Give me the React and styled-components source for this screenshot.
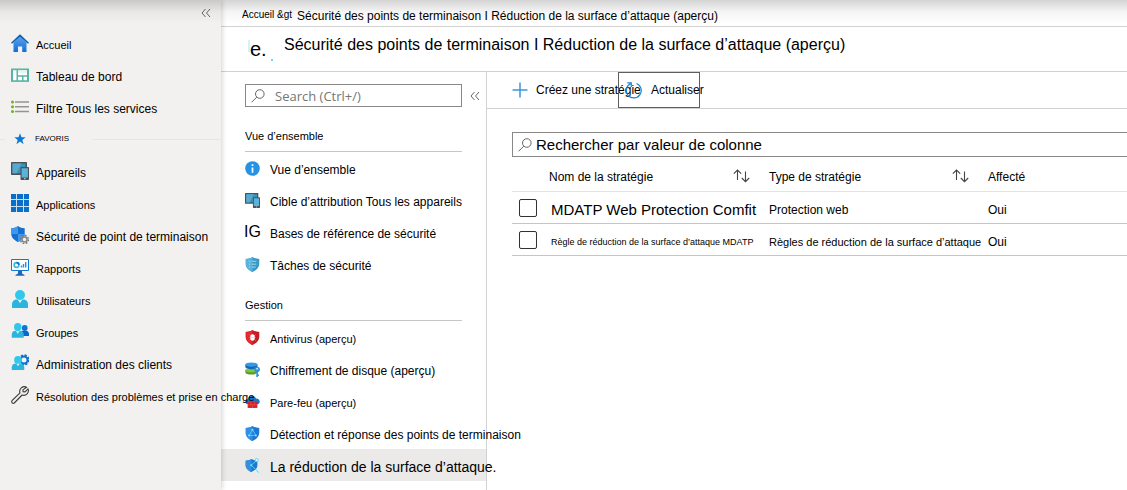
import React from "react";
import styled, { createGlobalStyle } from "styled-components";

const GlobalStyle = createGlobalStyle`
  *, *::before, *::after { box-sizing: border-box; }
  body {
    margin: 0;
    background: #fff;
    color: #000;
    font-family: "Liberation Sans", Arial, sans-serif;
    font-size: 12px;
    line-height: 16px;
  }
  button, input { font: inherit; color: inherit; }
`;

const Page = styled.div`
  position: relative;
  display: flex;
  min-height: 100vh;
  overflow: hidden;
`;

const TopShade = styled.div`
  position: absolute;
  inset: 0 0 auto;
  z-index: 3;
  height: 24px;
  pointer-events: none;
  background: linear-gradient(rgba(0, 0, 0, 0.17), rgba(0, 0, 0, 0.04) 50%, transparent);
`;

const Sidebar = styled.nav`
  position: relative;
  z-index: 2;
  flex: 0 0 221px;
  min-width: 0;
  background: #f2f1f0;
  box-shadow: 1px 0 5px rgba(0, 0, 0, 0.18);
`;

const SidebarTop = styled.div`
  display: flex;
  justify-content: flex-end;
  height: 27px;
  padding: 7px 9px 0;
`;

const CollapseButton = styled.button`
  display: flex;
  width: 12px;
  height: 12px;
  padding: 0;
  border: 0;
  background: none;
  color: #666;
`;

const List = styled.ul`
  margin: 0;
  padding: 0;
  list-style: none;
`;

const SideLink = styled.a`
  display: flex;
  align-items: center;
  gap: 7px;
  height: 32px;
  padding-left: 11px;
  color: inherit;
  text-decoration: none;
  white-space: nowrap;
`;

const IconBox = styled.span`
  display: flex;
  flex: none;
  align-items: center;
  justify-content: center;
  width: ${(p) => p.$size}px;
  height: ${(p) => p.$size}px;
  svg { display: block; width: 100%; height: 100%; }
`;

const Label = styled.span`
  padding-top: 4px;
  font-size: ${(p) => p.$size || 12}px;
`;

const Favorites = styled.div`
  display: flex;
  align-items: center;
  gap: 9px;
  height: 32px;
  font-size: 8px;
  &::before, &::after { content: ""; height: 1px; background: #e8e6e4; }
  &::before { width: 5px; }
  &::after { flex: 1; margin-left: 14px; }
`;

const Main = styled.main`
  display: flex;
  flex: 1;
  flex-direction: column;
  min-width: 0;
`;

const Breadcrumb = styled.nav`
  display: flex;
  align-items: center;
  gap: 5px;
  height: 27px;
  padding: 5px 0 0 21px;
  border-bottom: 1px solid #d2d2d2;
  white-space: nowrap;
`;

const HomeCrumb = styled.a`
  padding-bottom: 2px;
  color: inherit;
  font-size: 10px;
  text-decoration: none;
`;

const TitleBar = styled.header`
  display: flex;
  gap: 11px;
  height: 45px;
  padding-left: 27px;
  border-bottom: 1px solid #d2d2d2;
`;

const Mark = styled.div`
  display: flex;
  align-items: flex-end;
  width: 25px;
  padding-bottom: 10px;
  font-size: 20px;
  line-height: 24px;
  svg { flex: none; }
`;

const Title = styled.h1`
  margin: 0;
  padding-top: 8px;
  font-size: 16px;
  font-weight: 400;
  line-height: 20px;
  white-space: nowrap;
`;

const Body = styled.div`
  display: flex;
  flex: 1;
`;

const SubNav = styled.nav`
  flex: 0 0 266px;
  min-width: 0;
  padding-top: 12px;
  border-right: 1px solid #d2d2d2;
`;

const SearchRow = styled.div`
  display: flex;
  align-items: center;
  gap: 7px;
  padding-left: 24px;
`;

const SearchField = styled.label`
  display: flex;
  flex: ${(p) => (p.$wide ? "1" : "0 0 217px")};
  align-items: center;
  gap: ${(p) => (p.$wide ? 4 : 10)}px;
  height: ${(p) => (p.$wide ? 25 : 23)}px;
  padding-left: 5px;
  border: 1px solid #8a8886;
  border-right-width: ${(p) => (p.$wide ? 0 : 1)}px;
  svg { flex: none; }
`;

const SearchInput = styled.input`
  flex: 1;
  min-width: 0;
  padding: 0;
  border: 0;
  outline: 0;
  background: none;
  font-size: ${(p) => (p.$wide ? 15 : 13)}px;
  font-family: ${(p) => (p.$wide ? "inherit" : '"Open Sans", "Noto Sans", sans-serif')};
  &::placeholder { color: ${(p) => (p.$wide ? "#000" : "#767676")}; opacity: 1; }
`;

const GroupTitle = styled.h2`
  display: flex;
  align-items: flex-end;
  height: ${(p) => (p.$first ? 45 : 41)}px;
  margin: 0 24px;
  padding-bottom: 7px;
  border-bottom: 1px solid #c8c6c4;
  font-size: 11px;
  font-weight: 400;
`;

const SubLink = styled.a`
  position: relative;
  display: flex;
  align-items: center;
  gap: 10px;
  height: 32px;
  padding-left: 24px;
  background: ${(p) => (p.$active ? "#ebeae8" : "none")};
  color: inherit;
  text-decoration: none;
  white-space: nowrap;
`;

const Initials = styled.span`
  font-size: 16px;
`;

const Content = styled.section`
  flex: 1;
  min-width: 0;
`;

const Toolbar = styled.div`
  display: flex;
  height: 37px;
  padding-left: 25px;
  border-bottom: 1px solid #d2d2d2;
`;

const ToolButton = styled.button`
  display: flex;
  align-items: center;
  gap: ${(p) => (p.$boxed ? 8 : 7)}px;
  width: ${(p) => (p.$boxed ? 82 : 106)}px;
  height: 36px;
  padding: 0 0 0 ${(p) => (p.$boxed ? 6 : 0)}px;
  border: ${(p) => (p.$boxed ? "1px solid #605e5c" : "0")};
  background: none;
  white-space: nowrap;
  svg { flex: none; }
`;

const Panel = styled.div`
  padding: 23px 0 0 25px;
`;

const Table = styled.table`
  width: 100%;
  border-collapse: separate;
  border-spacing: 0;
  table-layout: fixed;
`;

const HeadCell = styled.th`
  width: ${(p) => (p.$width ? p.$width + "px" : "auto")};
  height: 35px;
  padding: 6px 0 0;
  border-bottom: 1px solid #e5e3e1;
  font-weight: 400;
  text-align: left;
`;

const HeadInner = styled.div`
  display: flex;
  align-items: center;
  justify-content: space-between;
  padding-right: 19px;
`;

const SortButton = styled.button`
  display: flex;
  height: 16px;
  padding: 0;
  border: 0;
  background: none;
`;

const Cell = styled.td`
  height: 32px;
  padding: 5px 0 0 ${(p) => p.$indent || 0}px;
  border-bottom: 1px solid #c8c6c4;
  font-size: ${(p) => p.$size || 12}px;
  white-space: nowrap;
`;

const CheckCell = styled(Cell)`
  padding: 0 0 0 7px;
`;

const Check = styled.input`
  display: block;
  width: 18px;
  height: 18px;
  margin: 0;
  appearance: none;
  border: 1px solid #323130;
  border-radius: 2px;
  background: #fff;
  &:checked { background: #0078d4; }
`;

const Chevrons = () => (
  <svg width="12" height="12" viewBox="0 0 12 12" fill="none" stroke="#666" strokeWidth="1">
    <path d="M5.500 2 2 6l3.500 4M10 2 6.500 6 10 10" />
  </svg>
);

const Magnifier = () => (
  <svg width="14" height="14" viewBox="0 0 14 14" fill="none" stroke="#666" strokeWidth="1">
    <circle cx="8.800" cy="5" r="4.300" />
    <path d="M5.700 8.200.6 13.300" />
  </svg>
);

const SortArrows = () => (
  <svg width="17" height="14" viewBox="0 0 17 14" fill="none" stroke="#444" strokeWidth="1.100">
    <path d="M4.500 11V1M.8 4.700l3.700-3.700 3.700 3.700M12.500 2.500v10.200M8.800 9l3.700 3.700L16.200 9" />
  </svg>
);

const HomeIcon = () => (
  <svg viewBox="0 0 18 18">
    <defs><linearGradient id="home" x2="0" y2="1"><stop stopColor="#5ea0ef" /><stop offset="1" stopColor="#0f6fd8" /></linearGradient></defs>
    <path d="M2.500 8.500 9 2.500l6.500 6V18h-4.300v-5.500H7V18H2.500z" fill="url(#home)" />
    <path d="M9 .2 18 8.700l-1 1L9 2.800 1 9.700l-1-1z" fill="#0b61b0" />
  </svg>
);

const DashboardIcon = () => (
  <svg viewBox="0 0 18 18">
    <path d="M0 2.500h18v13.400H0z" fill="#57b5a5" />
    <path d="M2 4.300h3.500v10H2zM7 4.300h9v5H7zM7 10.700h4v3.600H7zM12.500 10.700H16v3.600h-3.500z" fill="#fff" />
    <path d="M7 4.300h9v2.500H7z" fill="#e2f5f1" />
  </svg>
);

const ListIcon = () => (
  <svg viewBox="0 0 18 18">
    <path d="M4 4h14M4 8.800h14M4 13.500h14" stroke="#949494" strokeWidth="1.500" />
    <g fill="#6bb120"><circle cx="1.500" cy="4" r="1.500" /><circle cx="1.500" cy="8.800" r="1.500" /><circle cx="1.500" cy="13.500" r="1.500" /></g>
  </svg>
);

const StarIcon = () => (
  <svg width="12" height="12" viewBox="0 0 12 12">
    <path d="m6 .3 1.500 4h4.200L8.300 6.900l1.300 4.400L6 8.600l-3.600 2.700 1.300-4.400L.3 4.300h4.200z" fill="#0a78d7" />
  </svg>
);

const DevicesIcon = () => (
  <svg viewBox="0 0 18 18">
    <rect width="16" height="13" rx=".7" fill="#4c5158" />
    <path d="M1.500 1.500h13v9.800h-13z" fill="#3d91bb" />
    <path d="M1.500 1.500h9l-5 9.800h-4z" fill="#58a9cf" />
    <rect x="9.500" y="5" width="8.500" height="13" rx=".8" fill="#4c5158" />
    <path d="M10.600 6.200h6.300v9.400h-6.300z" fill="#59b4d9" />
    <path d="M13 16.700h1.500" stroke="#ddd" />
  </svg>
);

const GridIcon = () => (
  <svg viewBox="0 0 18 18">
    <path d="M0 0h18v18H0z" fill="#0870c9" />
    <path d="M5.500 0v18M12.500 0v18M0 5.500h18M0 12.500h18" stroke="#c9dff2" strokeWidth="1" />
  </svg>
);

const ShieldGearIcon = () => (
  <svg viewBox="0 0 18 18">
    <path d="M7 0c2 1.600 4 2.200 6.700 2.200V8c0 4-3.700 6.500-6.700 8C4 14.500.3 12 .3 8V2.200C3 2.200 5 1.600 7 0z" fill="#1770d1" />
    <path d="M7 0v8H.3V2.200C3 2.200 5 1.600 7 0zM7 8h6.700C13.700 12 10 14.500 7 16z" fill="#3b9af0" />
    <circle cx="13.500" cy="13.500" r="4" fill="none" stroke="#7a7a7a" strokeWidth="1.500" strokeDasharray="1.700 1.440" />
    <circle cx="13.500" cy="13.500" r="2.500" fill="#f2f1f0" stroke="#888" strokeWidth="1.600" />
  </svg>
);

const ReportIcon = () => (
  <svg viewBox="0 0 18 18">
    <path d="M.5 1.500h17v11H.5z" fill="#fff" stroke="#1677cf" />
    <circle cx="5.500" cy="7" r="2.400" fill="none" stroke="#32bedd" strokeWidth="1.600" />
    <path d="M5.500 4.600A2.400 2.400 0 0 1 7.900 7" fill="none" stroke="#0f6fd8" strokeWidth="1.600" />
    <path d="M10.500 9.500V7.500M12.500 9.500V6M14.700 9.500V4" stroke="#278de0" strokeWidth="1.400" />
    <path d="M7 13h4v2.500l2.500 1.500v.7h-9V17L7 15.500z" fill="#1769b5" />
  </svg>
);

const Person = () => (
  <g>
    <path d="M1 18v-3.500C1 11 3 9.500 6 9.500h6c3 0 5 1.500 5 5V18z" fill="#2bb5dc" />
    <path d="m6.500 9.300 2.500 4 2.500-4z" fill="#d9f7fd" />
    <circle cx="9" cy="5" r="5" fill="#32c8eb" />
  </g>
);

const UserIcon = () => <svg viewBox="0 0 18 18"><Person /></svg>;

const GroupIcon = () => (
  <svg viewBox="0 0 18 18">
    <path d="M9 14v-2c0-2 1.500-3.300 3-3.300h3c1.700 0 3 1.300 3 3.300v2z" fill="#0a67c5" />
    <circle cx="13.700" cy="6" r="2.900" fill="#0c75d6" />
    <g transform="translate(0 1) scale(.75 .82)"><Person /></g>
  </svg>
);

const AdminIcon = () => (
  <svg viewBox="0 0 18 18">
    <circle cx="13" cy="6" r="4.800" fill="none" stroke="#0b70ce" strokeWidth="1.800" strokeDasharray="2.200 1.570" />
    <circle cx="13" cy="6" r="3.500" fill="none" stroke="#0b70ce" strokeWidth="2" />
    <g transform="translate(0 2) scale(.78)"><Person /></g>
  </svg>
);

const WrenchIcon = () => (
  <svg viewBox="0 0 18 18" fill="none" stroke="#3b3a39" strokeWidth="1.100">
    <path d="M15.500 1.300A4.600 4.600 0 0 0 9 6.900L1 14.700c-1 1.500.8 3.300 2.300 2.300l7.800-8a4.600 4.600 0 0 0 5.900-6.100l-3 3-1.900-.1-.2-1.900z" />
  </svg>
);

const InfoIcon = () => (
  <svg viewBox="0 0 14 14">
    <circle cx="7" cy="7" r="6.800" fill="#2492e5" />
    <path d="M7 6v5M7 3v1.700" stroke="#fff" strokeWidth="1.600" />
  </svg>
);

const Shield = ({ fill, light }) => (
  <>
    <path d="M7 0c2 1.300 4 1.800 6.300 1.800V6.500c0 3.700-3.300 6-6.300 7.500-3-1.500-6.300-3.800-6.300-7.500V1.800C3 1.800 5 1.300 7 0z" fill={fill} />
    <path d="M7 0v14C4 12.500.7 10.200.7 6.500V1.800C3 1.800 5 1.300 7 0z" fill={light} />
  </>
);

const TasksIcon = () => (
  <svg viewBox="0 0 14 14">
    <Shield fill="#3999c6" light="#59b4d9" />
    <path d="M6.500 4h4M6.500 6.700h4M6.500 9.400h3.500M3.500 4h1.500M3.500 6.700h1.500M3.500 9.400h1.500" stroke="#a4d7ea" strokeWidth=".9" />
  </svg>
);

const AntivirusIcon = () => (
  <svg viewBox="0 0 14 14">
    <Shield fill="#c51c24" light="#e02a2d" />
    <ellipse cx="7" cy="7" rx="2.100" ry="3" fill="#fff" />
    <path d="m4.200 4.300 1.300 1.300M9.800 4.300 8.500 5.600M4 7h6M4.200 9.700l1.300-1.300M9.800 9.700 8.500 8.400" stroke="#f7baba" strokeWidth=".6" />
  </svg>
);

const DiskIcon = () => (
  <svg viewBox="0 0 14 14">
    <path d="M.3 7.500v2c0 3 11 3 11 0v-2z" fill="#5b9d25" />
    <ellipse cx="5.800" cy="7.600" rx="5.500" ry="2" fill="#82c43c" />
    <path d="M.3 2.400v2c0 3 11.400 3 11.400 0v-2z" fill="#1068bd" />
    <ellipse cx="6" cy="2.400" rx="5.700" ry="2" fill="#3399e4" />
    <circle cx="11.300" cy="7" r="2.600" fill="#2b91df" />
    <path d="M11.300 9v5M11.300 12.300h1.700" stroke="#2b91df" strokeWidth="1.500" />
    <circle cx="11.300" cy="6.300" r=".8" fill="#fff" />
  </svg>
);

const FirewallIcon = () => (
  <svg viewBox="0 0 14 14">
    <path d="M3 9.500C-.8 9.500-.5 5 2.600 4.800 3.300.8 9.300.5 10.300 4.300c4-.2 4.700 5.200 1 5.200z" fill="#1875cc" />
    <path d="M2.500 7.500h9V13h-9z" fill="#d42026" />
    <path d="M2.500 10.200h9M5.500 7.500v2.700M9 7.500v2.700M7 10.200V13" stroke="#ec6060" strokeWidth=".5" />
  </svg>
);

const DetectIcon = () => (
  <svg viewBox="0 0 14 14">
    <Shield fill="#1c78d2" light="#318fe4" />
    <path d="m7 3.500 3.200 5.300H3.800z" fill="none" stroke="#5ed0f2" strokeWidth=".8" />
    <g fill="#7ee5fb"><circle cx="7" cy="3.500" r=".9" /><circle cx="3.800" cy="8.800" r=".9" /><circle cx="10.200" cy="8.800" r=".9" /></g>
  </svg>
);

const SurfaceIcon = () => (
  <svg viewBox="0 0 14 14">
    <g transform="translate(0 1) scale(.87)"><Shield fill="#1c78d2" light="#348fe0" /></g>
    <path d="m10.500 2.700-4.700 4 7.200 7" fill="none" stroke="#54d5f4" strokeWidth=".9" />
    <circle cx="11" cy="1.900" r="1.500" fill="#e4faff" stroke="#54d5f4" strokeWidth=".8" />
    <circle cx="5.800" cy="6.700" r=".9" fill="#7ee5fb" />
  </svg>
);

const PlusIcon = () => (
  <svg width="17" height="16" viewBox="0 0 17 16"><path d="M8 .5v15M.5 8h15" stroke="#3a96dd" strokeWidth="1.500" /></svg>
);

const RefreshIcon = () => (
  <svg width="18" height="18" viewBox="0 0 18 18" fill="none" stroke="#1683d8" strokeWidth="1.200">
    <path d="M5.500 2.700a7.500 7.500 0 1 0 6-.2M2.300 1.800h4v4.300" />
  </svg>
);

const MarkLine = () => (
  <svg width="2" height="24" viewBox="0 0 2 24"><path d="M1 3v12" stroke="#a9e4f3" strokeWidth="1" /></svg>
);

const MarkDot = () => (
  <svg width="6" height="24" viewBox="0 0 6 24"><path d="M4 22h2v2H4z" fill="#65dcf3" /></svg>
);

const shortcuts = [
  ["Accueil", HomeIcon, 11],
  ["Tableau de bord", DashboardIcon],
  ["Filtre Tous les services", ListIcon],
];

const favorites = [
  ["Appareils", DevicesIcon],
  ["Applications", GridIcon, 11],
  ["Sécurité de point de terminaison", ShieldGearIcon],
  ["Rapports", ReportIcon, 11],
  ["Utilisateurs", UserIcon, 11],
  ["Groupes", GroupIcon, 11],
  ["Administration des clients", AdminIcon, 12],
  ["Résolution des problèmes et prise en charge", WrenchIcon, 11],
];

const overview = [
  ["Vue d’ensemble", InfoIcon],
  ["Cible d’attribution Tous les appareils", DevicesIcon],
  ["Bases de référence de sécurité", null],
  ["Tâches de sécurité", TasksIcon],
];

const management = [
  ["Antivirus (aperçu)", AntivirusIcon, 11],
  ["Chiffrement de disque (aperçu)", DiskIcon],
  ["Pare-feu (aperçu)", FirewallIcon, 11],
  ["Détection et réponse des points de terminaison", DetectIcon],
  ["La réduction de la surface d’attaque.", SurfaceIcon, 14, true],
];

const policies = [
  { name: "MDATP Web Protection Comfit", nameSize: 15, type: "Protection web", typeSize: 12 },
  { name: "Règle de réduction de la surface d’attaque MDATP", nameSize: 9, type: "Règles de réduction de la surface d’attaque", typeSize: 11 },
];

const SideList = ({ items }) => (
  <List>
    {items.map(([text, Icon, size]) => (
      <li key={text}>
        <SideLink href="#">
          <IconBox $size={18}><Icon /></IconBox>
          <Label $size={size}>{text}</Label>
        </SideLink>
      </li>
    ))}
  </List>
);

const SubList = ({ items }) => (
  <List>
    {items.map(([text, Icon, size, active]) => (
      <li key={text}>
        <SubLink href="#" $active={active} aria-current={active ? "page" : undefined}>
          <IconBox $size={15}>{Icon ? <Icon /> : <Initials>IG</Initials>}</IconBox>
          <Label $size={size}>{text}</Label>
        </SubLink>
      </li>
    ))}
  </List>
);

export default function App() {
  return (
    <Page>
      <GlobalStyle />
      <TopShade />
      <Sidebar>
        <SidebarTop>
          <CollapseButton aria-label="Réduire le menu"><Chevrons /></CollapseButton>
        </SidebarTop>
        <SideList items={shortcuts} />
        <Favorites><StarIcon /><span>FAVORIS</span></Favorites>
        <SideList items={favorites} />
      </Sidebar>
      <Main>
        <Breadcrumb>
          <HomeCrumb href="#">Accueil &amp;gt</HomeCrumb>
          <span>Sécurité des points de terminaison I Réduction de la surface d’attaque (aperçu)</span>
        </Breadcrumb>
        <TitleBar>
          <Mark><MarkLine />e.<MarkDot /></Mark>
          <Title>Sécurité des points de terminaison I Réduction de la surface d’attaque (aperçu)</Title>
        </TitleBar>
        <Body>
          <SubNav>
            <SearchRow>
              <SearchField>
                <Magnifier />
                <SearchInput aria-label="Search" placeholder="Search (Ctrl+/)" />
              </SearchField>
              <CollapseButton aria-label="Réduire le volet"><Chevrons /></CollapseButton>
            </SearchRow>
            <GroupTitle $first>Vue d’ensemble</GroupTitle>
            <SubList items={overview} />
            <GroupTitle>Gestion</GroupTitle>
            <SubList items={management} />
          </SubNav>
          <Content>
            <Toolbar>
              <ToolButton><PlusIcon />Créez une stratégie</ToolButton>
              <ToolButton $boxed><RefreshIcon />Actualiser</ToolButton>
            </Toolbar>
            <Panel>
              <SearchField $wide>
                <Magnifier />
                <SearchInput $wide aria-label="Rechercher par valeur de colonne" placeholder="Rechercher par valeur de colonne" />
              </SearchField>
              <Table>
                <thead>
                  <tr>
                    <HeadCell $width={37} aria-label="Sélection" />
                    <HeadCell $width={220}>
                      <HeadInner>Nom de la stratégie<SortButton aria-label="Trier par nom"><SortArrows /></SortButton></HeadInner>
                    </HeadCell>
                    <HeadCell $width={219}>
                      <HeadInner>Type de stratégie<SortButton aria-label="Trier par type"><SortArrows /></SortButton></HeadInner>
                    </HeadCell>
                    <HeadCell>Affecté</HeadCell>
                  </tr>
                </thead>
                <tbody>
                  {policies.map((p) => (
                    <tr key={p.name}>
                      <CheckCell><Check type="checkbox" aria-label={p.name} /></CheckCell>
                      <Cell $size={p.nameSize} $indent={2}>{p.name}</Cell>
                      <Cell $size={p.typeSize}>{p.type}</Cell>
                      <Cell>Oui</Cell>
                    </tr>
                  ))}
                </tbody>
              </Table>
            </Panel>
          </Content>
        </Body>
      </Main>
    </Page>
  );
}
